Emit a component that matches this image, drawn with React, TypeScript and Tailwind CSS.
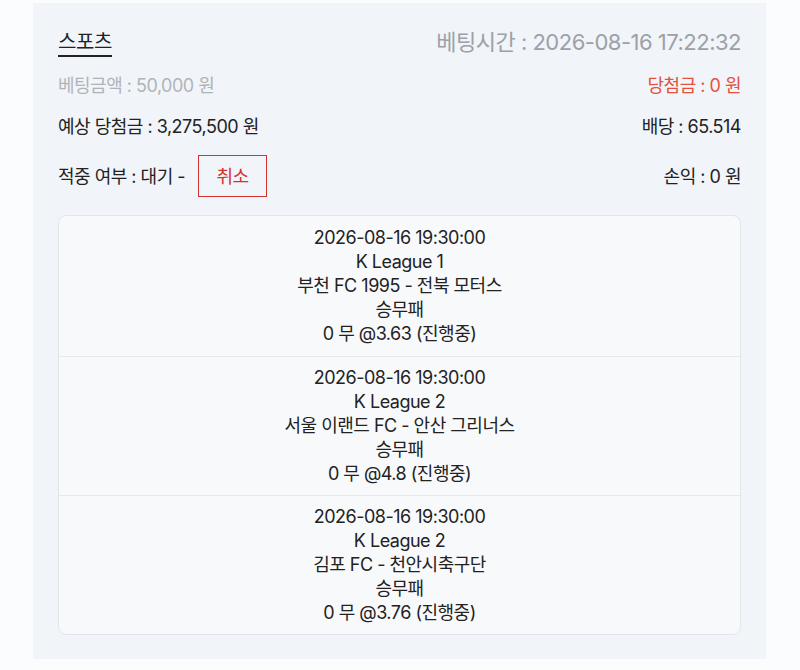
import React from "react";

type Bet = {
  time: string;
  league: string;
  match: string;
  market: string;
  pick: string;
};

const bets: Bet[] = [
  {
    time: "2026-08-16 19:30:00",
    league: "K League 1",
    match: "부천 FC 1995 - 전북 모터스",
    market: "승무패",
    pick: "0 무 @3.63 (진행중)",
  },
  {
    time: "2026-08-16 19:30:00",
    league: "K League 2",
    match: "서울 이랜드 FC - 안산 그리너스",
    market: "승무패",
    pick: "0 무 @4.8 (진행중)",
  },
  {
    time: "2026-08-16 19:30:00",
    league: "K League 2",
    match: "김포 FC - 천안시축구단",
    market: "승무패",
    pick: "0 무 @3.76 (진행중)",
  },
];

const font = {
  fontFamily: '"Inter", "Noto Sans CJK KR", "Noto Sans", sans-serif',
};

export default function App() {
  return (
    <div className="min-h-[670px] w-[800px] bg-[#fbfcfd] pt-[3px] pl-[33px]" style={font}>
      <div className="w-[733px] bg-[#f1f4f8] px-[25px] pt-[21px] pb-[24px] text-[#222]">
        <div className="flex h-[36px] items-center justify-between">
          <span className="text-[20px] tracking-[-0.4px] underline underline-offset-[6px] decoration-[1.5px]">
            스포츠
          </span>
          <span className="text-[22px] tracking-[-0.5px] text-[#9ca1a9]">
            베팅시간 : 2026-08-16 17:22:32
          </span>
        </div>
        <div className="mt-[13px] flex h-[24px] items-center justify-between text-[18px] tracking-[-0.5px]">
          <span className="text-[#b0b4ba]">베팅금액 : 50,000 원</span>
          <span className="text-[#e4513d]">당첨금 : 0 원</span>
        </div>
        <div className="mt-[17px] flex h-[24px] items-center justify-between text-[18px] tracking-[-0.5px]">
          <span>예상 당첨금 : 3,275,500 원</span>
          <span>배당 : 65.514</span>
        </div>
        <div className="mt-[17px] flex h-[42px] items-center justify-between text-[18px] tracking-[-0.5px]">
          <div className="flex items-center">
            <span>적중 여부 : 대기 -</span>
            <button className="ml-[13px] flex h-[42px] w-[69px] items-center justify-center border-[1.5px] border-[#d43131] text-[18px] text-[#d43131]">
              취소
            </button>
          </div>
          <span>손익 : 0 원</span>
        </div>
        <div className="mt-[18px] overflow-hidden rounded-[8px] border border-[#e2e5ea] bg-[#f8f9fb]">
          {bets.map((b, i) => (
            <div
              key={i}
              className={
                "flex flex-col items-center justify-center text-[18px] leading-[24px] tracking-[-0.5px] text-[#222] " +
                (i > 0 ? "h-[139px] border-t border-[#e6e9ed]" : "h-[140px]")
              }
            >
              <span>{b.time}</span>
              <span>{b.league}</span>
              <span>{b.match}</span>
              <span>{b.market}</span>
              <span>{b.pick}</span>
            </div>
          ))}
        </div>
      </div>
    </div>
  );
}
